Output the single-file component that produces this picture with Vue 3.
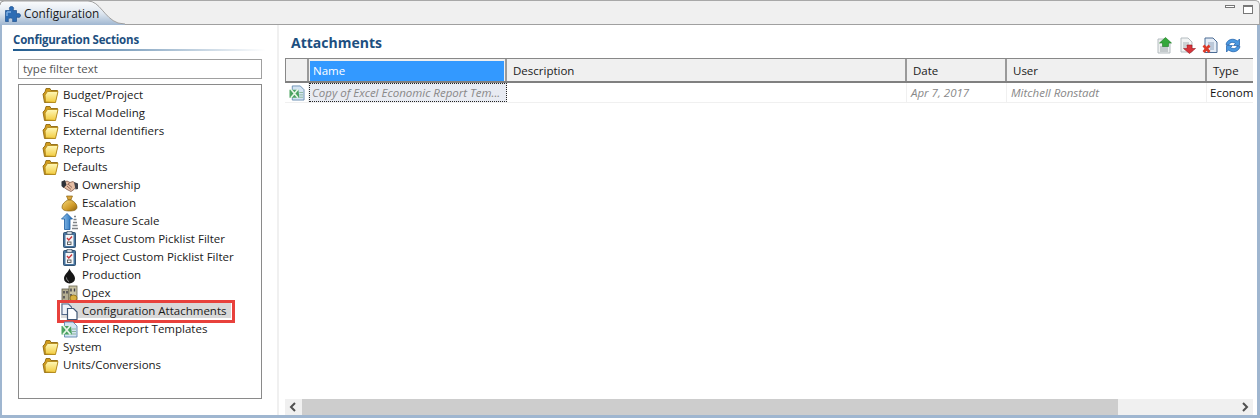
<template>
  <svg class="defs" width="0" height="0">
    <defs>
      <linearGradient id="fold" x1="0" y1="0" x2="0" y2="1"><stop offset="0" stop-color="#fff8b8"/><stop offset="1" stop-color="#f2cb3e"/></linearGradient>
      <linearGradient id="bag" x1="0" y1="0" x2="1" y2="1"><stop offset="0" stop-color="#f6d878"/><stop offset=".6" stop-color="#cf9a28"/><stop offset="1" stop-color="#8a5f10"/></linearGradient>
      <linearGradient id="arrow" x1="0" y1="0" x2="1" y2="0"><stop offset="0" stop-color="#9ccaf0"/><stop offset="1" stop-color="#1d6ab8"/></linearGradient>
      <linearGradient id="tabg" x1="0" y1="0" x2="0" y2="1"><stop offset="0" stop-color="#fbfcfd"/><stop offset=".5" stop-color="#dfe7f0"/><stop offset="1" stop-color="#a0b7d1"/></linearGradient>
      <symbol id="i-folder" viewBox="0 0 17 17">
        <path d="M1 7 L2.500 15.500 H13 L15.500 5 V3.500 H9 L8 1.500 H4 L3 5 Z" fill="#d29c1c" stroke="#8f6a12" stroke-width=".9"/>
        <path d="M3.500 15 L3 8 L5.500 4.500 H16 L13.500 15.500 Z" fill="url(#fold)" stroke="#b48a1c" stroke-width=".9"/>
      </symbol>
      <symbol id="i-hands" viewBox="0 0 17 17">
        <path d="M2 6 L6 4 L9 5.500 L12 4.500 L16 8 L13.500 12 L10 14.500 L6 12.500 L2.500 10 Z" fill="#e6bfa6" stroke="#80594a" stroke-width=".8"/>
        <path d="M0.500 4.500 L4 3 L5.500 8 L2.500 11 L0.500 9 Z" fill="#2d3138"/>
        <path d="M13 5 L17 6.500 V12 L14.500 12.500 Z" fill="#3f434b"/>
        <path d="M7 7 L11 10.500 M6 9 L10 12.500 M9 5.500 L6.500 7.500" stroke="#8a6050" stroke-width=".9" fill="none"/>
      </symbol>
      <symbol id="i-bag" viewBox="0 0 17 17">
        <path d="M5.500 1 H11.500 L9.800 5 H7.200 Z" fill="#d9a43a" stroke="#8a6414" stroke-width=".7"/>
        <path d="M6.800 5 H10.200 C13 6.500 16 9 16 12 C16 15 13 16 8.500 16 S1 15 1 12 C1 9 4 6.500 6.800 5 Z" fill="url(#bag)" stroke="#8a6414" stroke-width=".7"/>
      </symbol>
      <symbol id="i-scale" viewBox="0 0 17 17">
        <path d="M6 0.500 L11.500 6 H9 V16.500 H3.500 V6 H0.500 Z" fill="url(#arrow)" stroke="#1a5a9e" stroke-width=".8"/>
        <path d="M13 3.500h2M12.500 6.500h3M12 9.500h4M11.500 12.500h5M11 15.500h6" stroke="#808488" stroke-width="1.300"/>
      </symbol>
      <symbol id="i-clip" viewBox="0 0 17 17">
        <rect x="2.500" y="1.500" width="12" height="15" rx="1" fill="#47749f" stroke="#27486a" stroke-width=".9"/>
        <rect x="4.500" y="4" width="8" height="11" fill="#f4f6f8"/>
        <rect x="6" y="0.500" width="5" height="3" fill="#cdd6df" stroke="#46586a" stroke-width=".7"/>
        <path d="M6 7 L7.800 9 L11 5.500" fill="none" stroke="#c8343a" stroke-width="1.300"/>
        <rect x="6.500" y="11" width="3.500" height="2.500" fill="none" stroke="#555" stroke-width=".9"/>
      </symbol>
      <symbol id="i-drop" viewBox="0 0 17 17">
        <path d="M8.500 1.500 C9.500 5 14 7.500 14 11.500 A5.500 5 0 0 1 3 11.500 C3 7.500 7.500 5 8.500 1.500 Z" fill="#161616"/>
        <path d="M5.500 10.500 C5.500 12.500 6.500 14 8 14.500" stroke="#8a8a8a" fill="none"/>
      </symbol>
      <symbol id="i-opex" viewBox="0 0 17 17">
        <rect x="1" y="4" width="7" height="12" fill="#b4ae92" stroke="#5d5a48" stroke-width=".8"/>
        <rect x="8" y="1" width="8" height="15" fill="#c9c3a4" stroke="#6a6650" stroke-width=".8"/>
        <path d="M3 6v2.500M6 6v2.500M3 11v2.500M10 3.500v3M13.500 3.500v3M10 9v2.500" stroke="#3c3c48" stroke-width="1.400"/>
        <ellipse cx="12.500" cy="13" rx="3.500" ry="3" fill="#d8b040" stroke="#806010" stroke-width=".7"/>
      </symbol>
      <symbol id="i-docs" viewBox="0 0 17 17">
        <path d="M1 1 H7.500 L10.500 4 V11.500 H1 Z" fill="#eef2f8" stroke="#53698a" stroke-width="1.100"/>
        <path d="M6.500 5.500 H12.500 L16 9 V16.500 H6.500 Z" fill="#fdfeff" stroke="#3f5675" stroke-width="1.200"/>
      </symbol>
      <symbol id="i-excel" viewBox="0 0 17 17">
        <path d="M3.500 1 H12 L16 5 V16 H3.500 Z" fill="#d4e4f3" stroke="#5f87ad" stroke-width=".9"/>
        <path d="M0.500 5 H10 L11 13.500 H0.500 Z" fill="#3a9a50" opacity=".9"/>
        <path d="M2 4.500 L9.500 13.500 M9.500 4.500 L2 13.500" stroke="#e6f4e6" stroke-width="1.800"/>
        <path d="M11 8h4M11 10.500h4M11 13h4" stroke="#8ab59a"/>
      </symbol>
    </defs>
  </svg>

  <div class="win">
    <div class="tabbar">
      <div class="tab">
        <svg class="tab-bg" width="125" height="25" viewBox="0 0 125 25">
          <path d="M0 25 V5 Q0 1 4 1 H88 C100 1 104 18 118 23 L125 24 V25 Z" fill="url(#tabg)"/>
          <path d="M0 5 Q0 1 4 1 H88 C100 1 104 18 118 23 L125 24" fill="none" stroke="#a0a0a0"/>
        </svg>
        <svg class="puzzle" width="16" height="16" viewBox="0 0 16 16">
          <path d="M0.500 4.500 H5 C3.500 1.500 5 0.500 6.500 0.500 S9.500 1.500 8 4.500 H11.500 V8 C14 6.800 15.500 8 15.500 9.500 S14 12.200 11.500 11 V15.500 H7.500 C8.500 13 7 12 5.500 12 S2.500 13 3.500 15.500 H0.500 Z" fill="#2c6cb4" stroke="#1e4f8c" stroke-width=".7"/>
          <path d="M2 6 H6 M2 6 V10" stroke="#7fb0e4" stroke-width="1.400" fill="none"/>
        </svg>
        <span class="tab-label">Configuration</span>
      </div>
      <div class="win-btns">
        <span class="min"></span>
        <span class="max"></span>
      </div>
    </div>

    <div class="body">
      <aside class="side">
        <div class="side-title">Configuration Sections</div>
        <div class="filter">type filter text</div>
        <div class="tree">
          <div v-for="n in tree" :key="n.label" class="row" :class="{ child: n.child, sel: n.sel }">
            <svg class="ico" width="17" height="17"><use :href="'#i-' + n.icon" /></svg>
            <span class="lbl">{{ n.label }}</span>
          </div>
        </div>
      </aside>

      <main class="content">
        <div class="head">
          <h1>Attachments</h1>
          <div class="tools">
            <svg width="16" height="17" viewBox="0 0 16 17">
              <path d="M1 2 H8 L13 6 V16 H1 Z" fill="#eef0f0" stroke="#b4bcc0"/>
              <path d="M3 10h8M3 12h8M3 14h8" stroke="#9aa4a8"/>
              <path d="M8.500 0.500 L14.500 6 H11.500 V9.500 H5.500 V6 H2.500 Z" fill="#35a83a" stroke="#1d7a24" stroke-width=".6"/>
            </svg>
            <svg width="16" height="17" viewBox="0 0 16 17">
              <path d="M1 1 H8 L12 5 V15 H1 Z" fill="#f2f4f4" stroke="#b4bcc0"/>
              <path d="M3 6h6M3 8h6M3 10h3" stroke="#a8b0b4"/>
              <path d="M7 8 H12 V11.500 H15.500 L9.500 16.500 L3.500 11.500 H7 Z" fill="#d8343a" stroke="#98181e" stroke-width=".6"/>
            </svg>
            <svg width="16" height="17" viewBox="0 0 16 17">
              <path d="M3 1 H11 L15 5 V15.500 H3 Z" fill="#e4ecf6" stroke="#4c6c94"/>
              <path d="M6 6h6M6 8h6M7 10h5M8 12h4" stroke="#90a4bc"/>
              <path d="M1.500 8.500 L7.500 15 M7.500 8.500 L1.500 15" stroke="#dc3a28" stroke-width="2.600"/>
            </svg>
            <svg width="16" height="17" viewBox="0 0 16 17">
              <path d="M1 7.500 C2 2.500 8 0.500 12.500 4 L14.500 2 V8.500 H8.500 L10.500 6.500 C7.500 4.500 4.500 5.500 4 8 Z" fill="#4a98e0" stroke="#1f5fa8" stroke-width=".7"/>
              <path d="M15 9.500 C14 14.500 8 16.500 3.500 13 L1.500 15 V8.500 H7.500 L5.500 10.500 C8.500 12.500 11.500 11.500 12 9 Z" fill="#4a98e0" stroke="#1f5fa8" stroke-width=".7"/>
            </svg>
          </div>
        </div>

        <div class="table">
          <div class="cols thead">
            <div class="th corner"></div>
            <div class="th name"><span>Name</span></div>
            <div v-for="c in cols" :key="c" class="th">{{ c }}</div>
          </div>
          <div class="cols tr">
            <div class="td rowicon">
              <svg width="16" height="16"><use href="#i-excel" /></svg>
            </div>
            <div class="td focus">Copy of Excel Economic Report Tem...</div>
            <div class="td"></div>
            <div class="td muted">Apr 7, 2017</div>
            <div class="td muted">Mitchell Ronstadt</div>
            <div class="td plain">Econom</div>
          </div>
          <div class="spacer"></div>
          <div class="hscroll">
            <svg width="17" height="16" viewBox="0 0 17 16"><path d="M10 4 L6 8 L10 12" fill="none" stroke="#505050" stroke-width="2"/></svg>
            <div class="thumb"></div>
            <svg width="17" height="16" viewBox="0 0 17 16"><path d="M7 4 L11 8 L7 12" fill="none" stroke="#505050" stroke-width="2"/></svg>
          </div>
        </div>
      </main>
    </div>
  </div>
</template>

<script setup>
const tree = [
  { label: 'Budget/Project', icon: 'folder' },
  { label: 'Fiscal Modeling', icon: 'folder' },
  { label: 'External Identifiers', icon: 'folder' },
  { label: 'Reports', icon: 'folder' },
  { label: 'Defaults', icon: 'folder' },
  { label: 'Ownership', icon: 'hands', child: true },
  { label: 'Escalation', icon: 'bag', child: true },
  { label: 'Measure Scale', icon: 'scale', child: true },
  { label: 'Asset Custom Picklist Filter', icon: 'clip', child: true },
  { label: 'Project Custom Picklist Filter', icon: 'clip', child: true },
  { label: 'Production', icon: 'drop', child: true },
  { label: 'Opex', icon: 'opex', child: true },
  { label: 'Configuration Attachments', icon: 'docs', child: true, sel: true },
  { label: 'Excel Report Templates', icon: 'excel', child: true },
  { label: 'System', icon: 'folder' },
  { label: 'Units/Conversions', icon: 'folder' },
]

const cols = ['Description', 'Date', 'User', 'Type']
</script>

<style>
html, body { margin: 0; background: #fff; }
</style>

<style scoped>
.defs { position: absolute; }

.win {
  width: 1260px;
  height: 418px;
  box-sizing: border-box;
  display: flex;
  flex-direction: column;
  overflow: hidden;
  font-family: "Open Sans", "Noto Sans", sans-serif;
  font-size: 11.5px;
  color: #1a1a1a;
}

/* tab strip */
.tabbar {
  height: 25px;
  flex: none;
  box-sizing: border-box;
  display: flex;
  justify-content: space-between;
  background: #f0f0f0;
  border: 1px solid #a8a8a8;
  border-bottom: 1px solid #a0a0a0;
  border-left: 0;
  border-radius: 0 5px 0 0;
}
.tab {
  position: relative;
  width: 125px;
  height: 24px;
  display: flex;
  align-items: center;
  padding-left: 5px;
  box-sizing: border-box;
}
.tab-bg { position: absolute; left: 0; top: -1px; }
.puzzle { position: relative; flex: none; margin-top: 1px; }
.tab-label { position: relative; margin-left: 3px; font-size: 11.8px; }

.win-btns { display: flex; gap: 8px; padding: 4px 6px 0 0; }
.min { width: 8px; height: 1px; border: 1px solid #777; background: #fff; }
.max { width: 8px; height: 6px; border: 1px solid #777; border-top-width: 2px; background: #fff; }

/* main frame */
.body {
  flex: 1;
  min-height: 0;
  display: flex;
  border: 3px solid #9fb6d0;
  border-top: 0;
  border-left-width: 2px;
  background: #fff;
}

.side {
  width: 277px;
  flex: none;
  box-sizing: border-box;
  padding: 8px 0 0 11px;
  border-right: 2px solid #f0f0f0;
  display: flex;
  flex-direction: column;
}
.side-title {
  width: 252px;
  height: 18px;
  box-sizing: border-box;
  font-weight: 700;
  color: #1d4f80;
  line-height: 13px;
  letter-spacing: -0.2px;
  border-bottom: 2px solid;
  border-image: linear-gradient(90deg, #1f5a8e, #ffffff) 1;
}
.filter {
  width: 244px;
  height: 20px;
  box-sizing: border-box;
  margin: 8px 0 0 5px;
  border: 1px solid #a0a0a0;
  padding-left: 4px;
  line-height: 18px;
  color: #555;
}
.tree {
  width: 244px;
  height: 315px;
  box-sizing: border-box;
  margin: 5px 0 0 5px;
  border: 1px solid #8a8a8a;
  padding-top: 1px;
}
.row {
  height: 18px;
  display: flex;
  align-items: center;
  padding-left: 23px;
}
.row.child { padding-left: 42px; }
.ico { flex: none; position: relative; }
.lbl { position: relative; margin-left: 4px; white-space: nowrap; line-height: 16px; }
.row.sel { position: relative; }
.row.sel::before {
  content: "";
  position: absolute;
  left: 42px;
  top: 1px;
  width: 170px;
  height: 15px;
  background: #d9d9d9;
}
.row.sel::after {
  content: "";
  position: absolute;
  left: 38px;
  top: -2px;
  width: 178px;
  height: 23px;
  box-sizing: border-box;
  border: 3px solid #e8413c;
}

/* right side */
.content {
  flex: 1;
  min-width: 0;
  display: flex;
  flex-direction: column;
  padding: 0 4px 0 6px;
}
.head {
  height: 33px;
  flex: none;
  display: flex;
  justify-content: space-between;
  padding: 8px 0 0 6px;
  box-sizing: border-box;
}
h1 {
  margin: 0;
  font-size: 14px;
  line-height: 20px;
  font-weight: 700;
  color: #1d4f80;
}
.tools { display: flex; gap: 7px; padding: 4px 12px 0 0; }
.tools svg:nth-child(3) { margin-left: -1px; }

.table { flex: 1; min-height: 0; display: flex; flex-direction: column; }
.cols {
  display: grid;
  grid-template-columns: 24px 198px 400px 100px 200px 46px;
}
.thead {
  height: 25px;
  background: #f0f0f0;
  border-top: 1px solid #888;
  border-bottom: 2px solid #808080;
  box-sizing: border-box;
}
.th {
  border-right: 2px solid #9a9a9a;
  padding-left: 6px;
  line-height: 24px;
  overflow: hidden;
}
.th:last-child { border-right: 0; }
.corner { border-left: 1px solid #888; padding: 0; }
.name { padding: 2px 0 0 0; }
.name span {
  display: block;
  height: 20px;
  line-height: 20px;
  background: #3399ff;
  color: #fff;
  margin: 0 1px;
  padding-left: 3px;
}
.tr { height: 20px; border-bottom: 1px solid #f0f0f0; box-sizing: border-box; }
.td {
  line-height: 19px;
  padding-left: 5px;
  border-right: 1px solid #f0f0f0;
  white-space: nowrap;
  overflow: hidden;
  font-style: italic;
  color: #888;
}
.td.plain { font-style: normal; color: #111; padding-left: 3px; border-right: 0; }
.td.muted { padding-left: 4px; }
.rowicon { padding: 2px 0 0 4px; box-sizing: border-box; }
.focus {
  background: #e8ebf2;
  outline: 1px dotted #222;
  outline-offset: -1px;
  padding-left: 3px;
}
.spacer { flex: 1; }
.hscroll {
  height: 16px;
  flex: none;
  display: flex;
  background: #f0f0f0;
}
.hscroll svg { flex: none; }
.thumb { width: 816px; background: #cdcdcd; margin-right: auto; }
</style>
